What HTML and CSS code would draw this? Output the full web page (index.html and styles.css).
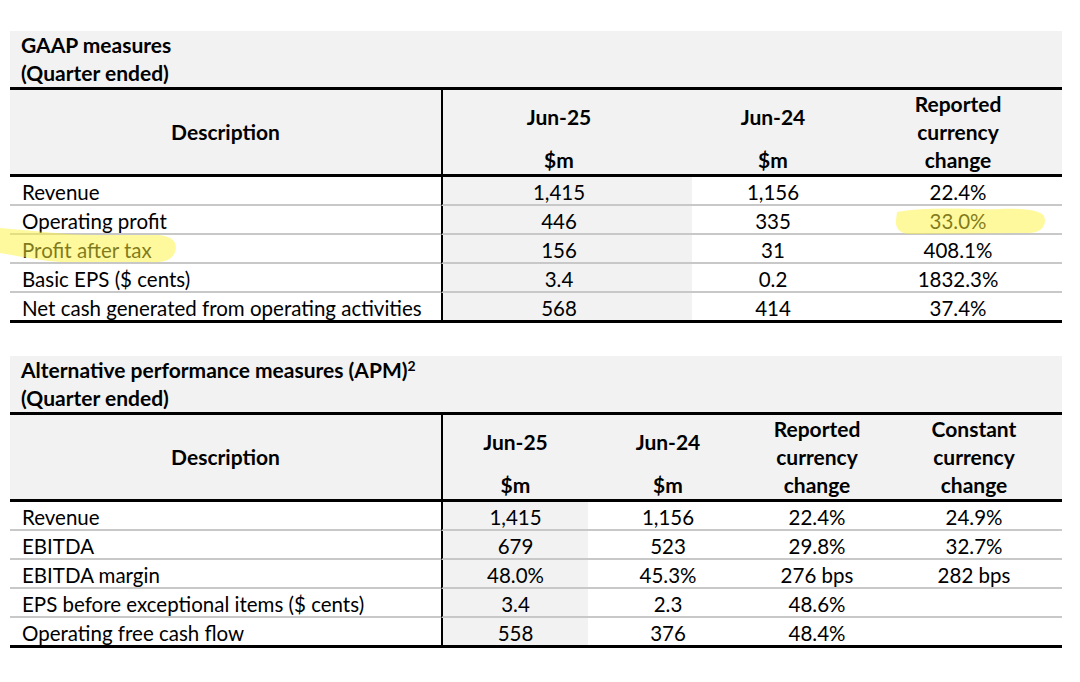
FILE: index.html
```html
<!DOCTYPE html>
<html lang="en">
<head>
<meta charset="utf-8">
<title>GAAP and APM measures</title>
<link rel="stylesheet" href="styles.css">
</head>
<body>
<div class="page">
  <section class="block block-gaap">
    <div class="title">GAAP measures<br>(Quarter ended)</div>
    <table class="fin t1">
      <colgroup>
        <col class="w-desc"><col class="w1-a"><col class="w1-b"><col class="w1-c">
      </colgroup>
      <thead>
        <tr>
          <th class="desc">Description</th>
          <th class="cur shift"><div class="hd"><span class="d1">Jun-25</span><span class="d2">$m</span></div></th>
          <th><div class="hd"><span class="d1">Jun-24</span><span class="d2">$m</span></div></th>
          <th class="chg">Reported<br>currency<br>change</th>
        </tr>
      </thead>
      <tbody>
        <tr><td class="label">Revenue</td><td class="cur shift">1,415</td><td>1,156</td><td>22.4%</td></tr>
        <tr><td class="label">Operating profit</td><td class="cur shift">446</td><td>335</td><td>33.0%</td></tr>
        <tr><td class="label">Profit after tax</td><td class="cur shift">156</td><td>31</td><td>408.1%</td></tr>
        <tr><td class="label">Basic EPS ($ cents)</td><td class="cur shift">3.4</td><td>0.2</td><td>1832.3%</td></tr>
        <tr class="last"><td class="label">Net cash generated from operating activities</td><td class="cur shift">568</td><td>414</td><td>37.4%</td></tr>
      </tbody>
    </table>
  </section>

  <section class="block block-apm">
    <div class="title">Alternative performance measures (APM)<sup>2</sup><br>(Quarter ended)</div>
    <table class="fin t2">
      <colgroup>
        <col class="w-desc"><col class="w2-a"><col class="w2-b"><col class="w2-c"><col class="w2-d">
      </colgroup>
      <thead>
        <tr>
          <th class="desc">Description</th>
          <th class="cur"><div class="hd"><span class="d1">Jun-25</span><span class="d2">$m</span></div></th>
          <th><div class="hd"><span class="d1">Jun-24</span><span class="d2">$m</span></div></th>
          <th class="chg">Reported<br>currency<br>change</th>
          <th class="chg">Constant<br>currency<br>change</th>
        </tr>
      </thead>
      <tbody>
        <tr><td class="label">Revenue</td><td class="cur">1,415</td><td>1,156</td><td>22.4%</td><td>24.9%</td></tr>
        <tr><td class="label">EBITDA</td><td class="cur">679</td><td>523</td><td>29.8%</td><td>32.7%</td></tr>
        <tr><td class="label">EBITDA margin</td><td class="cur">48.0%</td><td>45.3%</td><td>276 bps</td><td>282 bps</td></tr>
        <tr><td class="label">EPS before exceptional items ($ cents)</td><td class="cur">3.4</td><td>2.3</td><td>48.6%</td><td></td></tr>
        <tr class="last"><td class="label">Operating free cash flow</td><td class="cur">558</td><td>376</td><td>48.4%</td><td></td></tr>
      </tbody>
    </table>
  </section>

  <svg class="marks" width="1080" height="682" viewBox="0 0 1080 682" aria-hidden="true">
    <path class="hl" d="M0,228 C30,230 60,235 100,235 L158,235 C174,236 178,244 175,252 C172,260 164,263 150,262 L60,262 C40,261 20,256 0,253 Z"/>
    <path class="hl" d="M897,212 C930,206 970,210 1000,209 C1020,208 1040,210 1044,216 C1047,224 1043,232 1030,233 L910,234 C900,234 895,228 896,220 Z"/>
  </svg>
</div>
</body>
</html>
```

FILE: styles.css
```css
html, body {
  margin: 0;
  padding: 0;
  background: #ffffff;
}

.page {
  position: relative;
  width: 1080px;
  height: 682px;
  padding: 31px 0 0 10px;
  box-sizing: border-box;
  font-family: Lato, "Liberation Sans", sans-serif;
  color: #000;
}

.block {
  width: 1052px;
}

.block-apm {
  margin-top: 33px;
}

.title {
  background: #f2f2f2;
  font-weight: 700;
  font-size: 21px;
  line-height: 28px;
  padding-left: 11px;
}

.title sup {
  font-size: 14px;
  line-height: 0;
  vertical-align: 7px;
}

.fin {
  width: 1052px;
  table-layout: fixed;
  border-collapse: separate;
  border-spacing: 0;
  font-size: 20.5px;
}

.w-desc { width: 431px; }
.w1-a { width: 251px; }
.w1-b { width: 162px; }
.w1-c { width: 208px; }
.w2-a { width: 147px; }
.w2-b { width: 160px; }
.w2-c { width: 138px; }
.w2-d { width: 176px; }

.fin th {
  background: #f2f2f2;
  border-top: 3px solid #000;
  border-bottom: 3px solid #000;
  padding: 0;
  height: 84px;
  font-size: 21px;
  font-weight: 700;
  line-height: 28px;
  text-align: center;
  vertical-align: top;
}

.fin th.desc {
  vertical-align: middle;
}

.hd {
  display: flex;
  flex-direction: column;
  align-items: center;
  height: 84px;
}

.hd .d1 {
  margin-top: 13px;
}

.hd .d2 {
  margin-top: auto;
}

.fin td {
  padding: 3px 0 0 0;
  height: 24px;
  line-height: 24px;
  border-bottom: 2px solid #c8c8c8;
  text-align: center;
  white-space: nowrap;
}

.fin td.label {
  text-align: left;
  padding-left: 12px;
}

.fin .cur {
  border-left: 2px solid #000;
}

.fin td.cur {
  background: #f2f2f2;
}

.fin .shift {
  padding-right: 17px;
}

.fin tr.last td {
  border-bottom: 3px solid #000;
}

.marks {
  position: absolute;
  top: 0;
  left: 0;
  pointer-events: none;
}

.hl {
  fill: rgb(255, 243, 60);
  opacity: 0.5;
}
```
